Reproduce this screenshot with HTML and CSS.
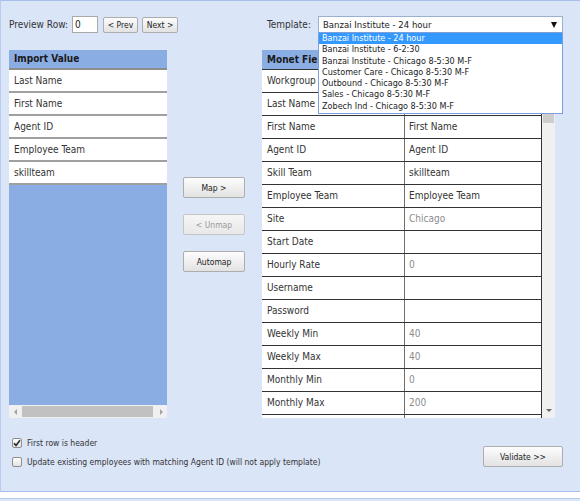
FILE: index.html
```html
<!DOCTYPE html>
<html>
<head>
<meta charset="utf-8">
<link rel="stylesheet" href="styles.css">
</head>
<body>
<div class="page">
  <div class="toolbar">
    <div class="preview">
      <span class="lbl">Preview Row:</span>
      <span class="num">0</span>
      <button class="btn sm prev">&lt; Prev</button>
      <button class="btn sm next">Next &gt;</button>
    </div>
    <div class="template">
      <span class="lbl tlbl">Template:</span>
      <div class="select">
        <span>Banzai Institute - 24 hour</span>
        <span class="caret"></span>
        <ul class="options">
          <li class="sel">Banzai Institute - 24 hour</li>
          <li>Banzai Institute - 6-2:30</li>
          <li>Banzai Institute - Chicago 8-5:30 M-F</li>
          <li>Customer Care - Chicago 8-5:30 M-F</li>
          <li>Outbound - Chicago 8-5:30 M-F</li>
          <li>Sales - Chicago 8-5:30 M-F</li>
          <li>Zobech Ind - Chicago 8-5:30 M-F</li>
        </ul>
      </div>
    </div>
  </div>

  <div class="main">
    <div class="left">
      <div class="ltable">
        <div class="lhead">Import Value</div>
        <div class="lrow">Last Name</div>
        <div class="lrow">First Name</div>
        <div class="lrow">Agent ID</div>
        <div class="lrow">Employee Team</div>
        <div class="lrow">skillteam</div>
      </div>
      <div class="hscroll">
        <span class="arr-l"></span>
        <span class="hthumb"></span>
        <span class="arr-r"></span>
      </div>
    </div>

    <div class="mid">
      <button class="btn mbtn">Map &gt;</button>
      <button class="btn mbtn dis">&lt; Unmap</button>
      <button class="btn mbtn">Automap</button>
    </div>

    <div class="right">
      <div class="rtable">
        <div class="rrow rhead"><div class="c1">Monet Field</div><div class="c2"></div></div>
        <div class="rrow"><div class="c1">Workgroup</div><div class="c2"></div></div>
        <div class="rrow"><div class="c1">Last Name</div><div class="c2"></div></div>
        <div class="rrow"><div class="c1">First Name</div><div class="c2">First Name</div></div>
        <div class="rrow"><div class="c1">Agent ID</div><div class="c2">Agent ID</div></div>
        <div class="rrow"><div class="c1">Skill Team</div><div class="c2">skillteam</div></div>
        <div class="rrow"><div class="c1">Employee Team</div><div class="c2">Employee Team</div></div>
        <div class="rrow"><div class="c1">Site</div><div class="c2 gray">Chicago</div></div>
        <div class="rrow"><div class="c1">Start Date</div><div class="c2"></div></div>
        <div class="rrow"><div class="c1">Hourly Rate</div><div class="c2 gray">0</div></div>
        <div class="rrow"><div class="c1">Username</div><div class="c2"></div></div>
        <div class="rrow"><div class="c1">Password</div><div class="c2"></div></div>
        <div class="rrow"><div class="c1">Weekly Min</div><div class="c2 gray">40</div></div>
        <div class="rrow"><div class="c1">Weekly Max</div><div class="c2 gray">40</div></div>
        <div class="rrow"><div class="c1">Monthly Min</div><div class="c2 gray">0</div></div>
        <div class="rrow"><div class="c1">Monthly Max</div><div class="c2 gray">200</div></div>
        <div class="rrow"><div class="c1"></div><div class="c2"></div></div>
      </div>
      <div class="vscroll">
        <span class="vthumb"></span>
        <span class="vfill"></span>
        <span class="arr-d"></span>
      </div>
    </div>
  </div>

  <div class="footer">
    <div class="checks">
      <label class="chk"><span class="box"><svg width="8" height="8" viewBox="0 0 8 8"><path d="M1 4.2 L3 6.4 L7 1.2" fill="none" stroke="#2b2b2b" stroke-width="1.6"/></svg></span>First row is header</label>
      <label class="chk"><span class="box"></span>Update existing employees with matching Agent ID (will not apply template)</label>
    </div>
    <button class="btn validate">Validate &gt;&gt;</button>
  </div>
</div>
<div class="strip"></div>
<div class="under"></div>
</body>
</html>
```

FILE: styles.css
```css
* { box-sizing: border-box; }
html, body { margin: 0; padding: 0; }
body {
  width: 580px;
  height: 501px;
  overflow: hidden;
  background: #dbe5f8;
  font-family: "DejaVu Sans Condensed", "DejaVu Sans", sans-serif;
  font-stretch: condensed;
  color: #333;
}
.page {
  height: 492px;
  border-top: 1px solid #a5c0ea;
  border-left: 1px solid #b7cbee;
  border-bottom: 1px solid #a5c0ea;
  padding: 15px 0 0 8px;
}
.toolbar { display: flex; height: 17px; align-items: center; }
.preview { width: 258px; display: flex; align-items: center; }
.lbl { font-size: 10px; color: #333; }
.num {
  width: 26px; height: 17px; margin-left: 4px;
  background: #fff; border: 1px solid #a9a9a9;
  font-size: 10px; padding-left: 2px; line-height: 15px; color: #222;
}
.btn {
  font-family: inherit; font-stretch: condensed;
  font-size: 8.5px; color: #222;
  background: linear-gradient(#fdfdfd, #e2e2e2);
  border: 1px solid #adadad; border-radius: 2px; padding: 0;
}
.btn.sm { height: 16px; }
.prev { width: 35px; margin-left: 5px; }
.next { width: 36px; margin-left: 4px; }
.template { display: flex; align-items: center; }
.tlbl { width: 51px; }
.select {
  position: relative; width: 245px; height: 17px;
  background: #fff; border: 1px solid #9cb0d4;
  font-size: 9.5px; padding-left: 4px; line-height: 15px; color: #222;
}
.caret {
  position: absolute; right: 5px; top: 5px; width: 0; height: 0;
  border-left: 3.5px solid transparent; border-right: 3.5px solid transparent;
  border-top: 6px solid #111;
}
.options {
  position: absolute; left: -1px; top: 15px; width: 245px;
  list-style: none; margin: 0; padding: 0 0 1px;
  border: 1px solid #7b9fd8; background: #fff;
  font-size: 9px; line-height: 11.3px; color: #222;
}
.options li { height: 11.3px; padding-left: 3px; white-space: nowrap; }
.options li.sel { background: #3399ff; color: #fff; }

.main { display: flex; height: 368px; margin-top: 17px; }
.left { width: 158px; background: #8aade4; display: flex; flex-direction: column; }
.ltable { flex: 1; }
.lhead {
  height: 20px; border-bottom: 2px solid #8d8d8d;
  font-weight: bold; font-size: 10px; padding-left: 5px; line-height: 18px; color: #1a1a1a;
}
.lrow {
  height: 23px; background: #fff; border-bottom: 2px solid #a0a0a0;
  padding-left: 5px; font-size: 10px; line-height: 21px; color: #333;
}
.hscroll {
  height: 13px; background: #f0f0f0;
  display: flex; align-items: center; padding-left: 5px;
}
.arr-l { width: 0; height: 0; border-top: 3px solid transparent; border-bottom: 3px solid transparent; border-right: 3px solid #a3a3a3; }
.arr-r { width: 0; height: 0; border-top: 3px solid transparent; border-bottom: 3px solid transparent; border-left: 3px solid #a3a3a3; margin-left: 7px; }
.hthumb { width: 131px; height: 11px; background: #c1c1c1; margin-left: 5px; }

.mid {
  width: 62px; margin-left: 16px; margin-right: 17px;
  display: flex; flex-direction: column; gap: 16px; padding-top: 127px;
}
.mbtn { height: 21px; width: 62px; }
.mbtn.dis { color: #9a9a9a; border-color: #c6c6c6; background: linear-gradient(#f6f6f6, #e8e8e8); }

.right { width: 293px; display: flex; }
.rtable { width: 280px; overflow: hidden; border-right: 1px solid #333; background: #fff; }
.rrow { display: flex; height: 23px; border-bottom: 1px solid #333; font-size: 10px; line-height: 22px; color: #333; }
.rhead { height: 20px; background: #8aade4; font-weight: bold; line-height: 19px; color: #1a1a1a; }
.c1 { width: 143px; border-right: 1px solid #6e6e6e; padding-left: 5px; white-space: nowrap; }
.c2 { flex: 1; padding-left: 4px; white-space: nowrap; }
.gray { color: #8c8c8c; }
.vscroll {
  width: 13px; background: #f0f0f0;
  display: flex; flex-direction: column; align-items: center;
  padding: 12px 1px 6px;
}
.vthumb { width: 11px; height: 61px; background: #cdcdcd; }
.vfill { flex: 1; }
.arr-d { width: 0; height: 0; border-left: 3px solid transparent; border-right: 3px solid transparent; border-top: 3px solid #6b6b6b; }

.footer { display: flex; justify-content: space-between; margin-top: 15px; }
.checks { padding-left: 3px; }
.chk { display: flex; align-items: center; height: 19px; font-size: 8.5px; color: #333; }
.box {
  width: 10px; height: 10px; border: 1px solid #8e8e8e; border-radius: 2px;
  background: linear-gradient(#fff, #e2e2e2); margin-right: 5px;
  display: flex; align-items: center; justify-content: center;
}
.box svg { display: block; }
.validate { width: 80px; height: 21px; margin-top: 13px; margin-right: 17px; }

.strip { height: 6px; background: #fff; }
.under { height: 10px; border-top: 1px solid #b8cdee; background: #dbe5f8; }
```
